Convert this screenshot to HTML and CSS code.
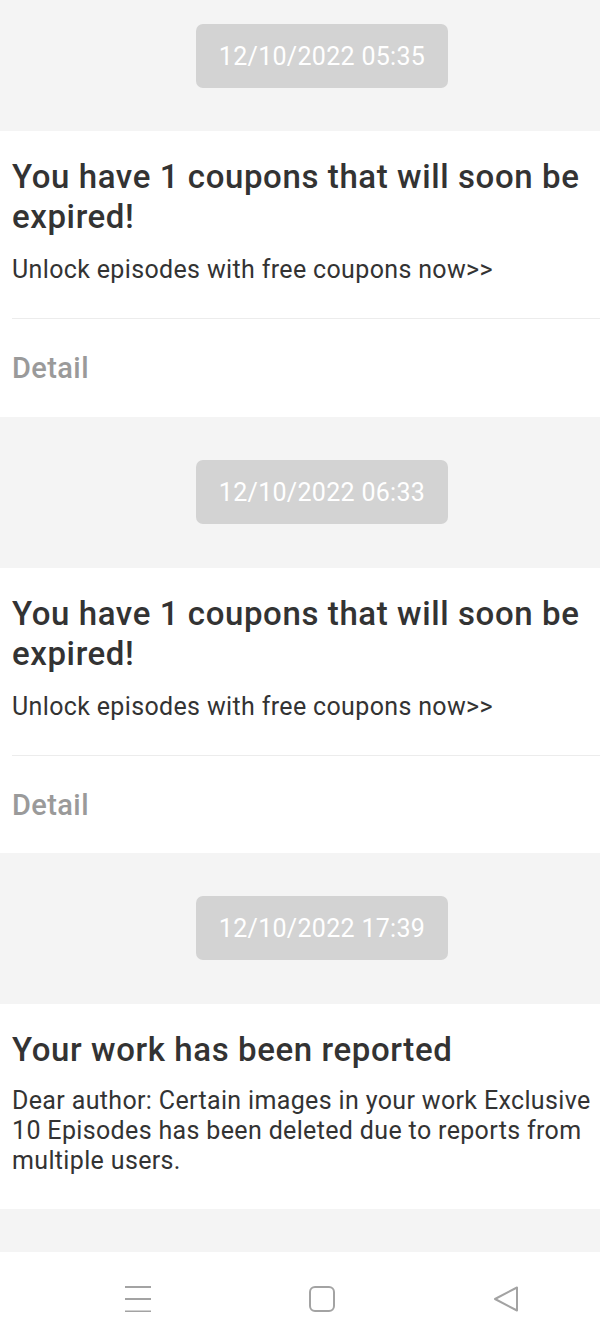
FILE: index.html
```html
<!DOCTYPE html>
<html>
<head>
<meta charset="utf-8">
<link rel="stylesheet" href="styles.css">
</head>
<body>
<div class="screen">
  <main class="feed">
    <section class="stamp stamp-first"><div class="pill">12/10/2022 05:35</div></section>
    <article class="card">
      <div class="card-body">
        <h2 class="title">You have 1 coupons that will soon be expired!</h2>
        <p class="text">Unlock episodes with free coupons now&gt;&gt;</p>
      </div>
      <div class="detail">Detail</div>
    </article>
    <section class="stamp"><div class="pill">12/10/2022 06:33</div></section>
    <article class="card">
      <div class="card-body">
        <h2 class="title">You have 1 coupons that will soon be expired!</h2>
        <p class="text">Unlock episodes with free coupons now&gt;&gt;</p>
      </div>
      <div class="detail detail-short">Detail</div>
    </article>
    <section class="stamp"><div class="pill">12/10/2022 17:39</div></section>
    <article class="card">
      <div class="card-body card-body-last">
        <h2 class="title">Your work has been reported</h2>
        <p class="text">Dear author: Certain images in your work Exclusive 10 Episodes has been deleted due to reports from multiple users.</p>
      </div>
    </article>
    <section class="stamp stamp-tail"></section>
  </main>
  <nav class="navbar">
    <svg class="nav-icon" width="26" height="26" viewBox="0 0 26 26" fill="none" stroke="#a3a3a3" stroke-width="2">
      <line x1="0" y1="1" x2="26" y2="1"/>
      <line x1="0" y1="13" x2="26" y2="13"/>
      <line x1="0" y1="25.5" x2="26" y2="25.5"/>
    </svg>
    <svg class="nav-icon" width="26" height="26" viewBox="0 0 26 26" fill="none" stroke="#a3a3a3" stroke-width="2">
      <rect x="1" y="1" width="24" height="24" rx="5"/>
    </svg>
    <svg class="nav-icon" width="26" height="26" viewBox="0 0 26 26" fill="none" stroke="#a3a3a3" stroke-width="2" stroke-linejoin="round">
      <path d="M24 1.5 L24 24.5 L2 13 Z"/>
    </svg>
  </nav>
</div>
</body>
</html>
```
FILE: styles.css
```css
* { box-sizing: border-box; }
html, body { margin: 0; padding: 0; }
body {
  font-family: Roboto, "Noto Sans", "Liberation Sans", sans-serif;
  background: #fff;
  color: #333;
}
.screen {
  width: 600px;
  height: 1334px;
  display: flex;
  flex-direction: column;
  overflow: hidden;
}
.feed {
  flex: 1;
  overflow: hidden;
  background: #f4f4f4;
}
.stamp {
  background: #f4f4f4;
  display: flex;
  justify-content: center;
  padding: 43px 0 44px 44px;
}
.stamp-first { padding-top: 24px; padding-bottom: 43px; }
.stamp-tail { height: 151px; }
.pill {
  width: 252px;
  height: 64px;
  border-radius: 7px;
  background: #d3d3d3;
  color: #fff;
  font-size: 25px;
  letter-spacing: 0.3px;
  display: flex;
  align-items: center;
  justify-content: center;
}
.card {
  background: #fff;
  padding-left: 12px;
}
.card-body {
  padding: 26px 4px 33px 0;
  border-bottom: 1px solid #ececec;
}
.card-body-last { border-bottom: none; }
.card-body-last .text { margin-top: 16px; }
.title {
  margin: 0;
  font-size: 33px;
  font-weight: 500;
  letter-spacing: 0.6px;
  line-height: 40px;
  color: #333;
}
.text {
  margin: 18px 0 0;
  font-size: 25px;
  letter-spacing: 0.35px;
  line-height: 30px;
  color: #333;
}
.detail {
  height: 98px;
  display: flex;
  align-items: center;
  font-size: 29px;
  letter-spacing: 0.4px;
  font-weight: 500;
  color: #9a9a9a;
}
.detail-short { height: 97px; }
.navbar {
  height: 82px;
  flex: none;
  background: #fff;
  display: flex;
  align-items: center;
  justify-content: center;
  gap: 158px;
  padding-left: 44px;
  padding-top: 11px;
}
.nav-icon { display: block; }
```
